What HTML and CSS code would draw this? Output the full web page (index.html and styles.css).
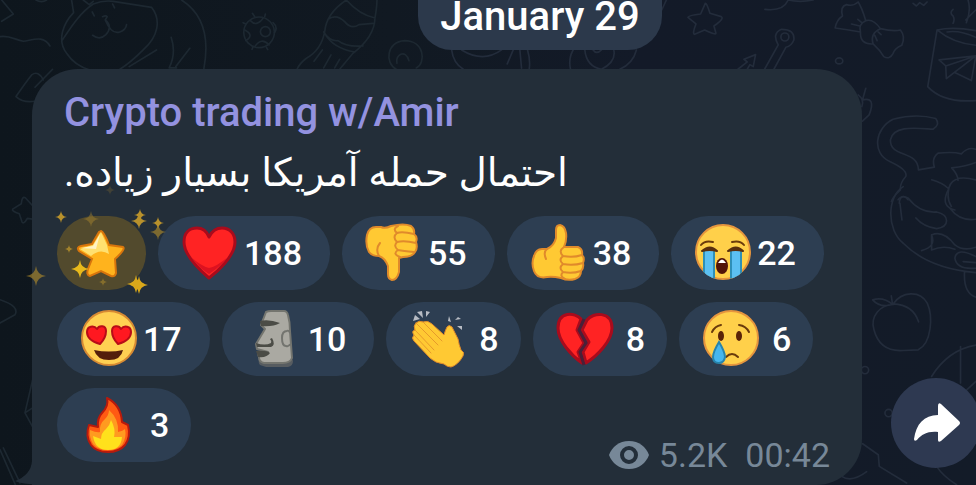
FILE: index.html
```html
<!DOCTYPE html>
<html lang="en">
<head>
    <meta charset="UTF-8">
    <meta name="viewport" content="width=device-width, initial-scale=1.0">
    <title>Crypto trading w/Amir</title>
    <link rel="stylesheet" href="styles.css">
</head>
<body>
    <!-- Wallpaper doodles -->
    <svg class="wallpaper" aria-hidden="true">
        <g class="doodle-left" transform="scale(.333)">
            <path d="M5 0L40 42L5 64M0 110C30 105 45 120 70 124C100 120 130 105 150 138M108 0Q125 10 140 0"/>
            <path d="M215 0L221 38C190 70 170 120 200 160Q225 198 270 210M186 122C220 70 245 35 280 12Q310 0 340 4L455 22C485 60 475 110 430 150Q390 190 360 208M250 0L268 14L280 4"/>
            <path d="M277 36L283 48M338 12L344 24M308 50Q318 45 322 50L316 60Q340 80 318 104Q300 122 278 106M316 60Q335 105 360 96Q378 90 380 74M545 0Q640 60 612 208M514 112Q530 160 508 204L530 204M570 145L528 200M470 150L388 200"/>
            <circle cx="778" cy="97" r="46"/>
            <circle cx="797" cy="95" r="15"/>
            <path d="M752 62Q770 82 790 55M735 90Q765 105 738 122M765 140Q785 110 808 135M820 68Q836 82 824 98M765 50L758 40M795 50L797 42M738 72L730 68M760 140L757 148M800 142L804 149"/>
            <path d="M1040 0Q980 40 975 95Q965 150 920 175Q900 190 892 208M1040 0Q1080 45 1126 54Q1132 20 1132 0M1126 54Q1125 110 1060 160L1020 208M985 58Q1010 40 1035 65Q1055 90 1078 74L1120 70M972 96Q990 125 1015 122Q1040 142 1090 138M975 100Q1000 145 1066 156M968 150L943 184M994 165L972 204M1020 178L1005 204"/>
            <path d="M1190 208C1155 190 1160 125 1215 122C1275 122 1280 190 1250 204M1228 182C1218 145 1185 165 1192 190"/>
            <path d="M130 240Q115 210 95 225Q75 250 48 290Q70 310 105 304M158 208L105 262"/>
            <path d="M98 618L76 594Q66 588 64 612L38 628Q34 634 58 642L66 666Q70 676 82 656L98 658"/>
            <path d="M0 900Q60 920 45 945L0 970M98 1225L75 1240L98 1282M98 1140L75 1240M0 1350L48 1460M10 1345L60 1450"/>
        </g>
        <g class="doodle-right" transform="translate(400 0) scale(.333)">
            <path d="M155 150Q160 190 190 208M185 150Q250 190 305 150M340 150L322 192M360 150L365 205M383 150Q392 180 388 208M512 208Q505 175 520 150M710 150Q700 190 660 208M555 150Q560 200 605 208Q650 185 642 150M580 150Q590 165 605 150M800 0L786 30"/>
        </g>
        <g class="doodle-right" transform="translate(660 0) scale(.333)">
            <path d="M136 10Q140 8 150 40L184 50Q194 56 162 78L168 100Q168 106 134 90L104 103Q96 102 108 72L84 52Q86 46 122 42Z"/>
            <path d="M315 28Q370 35 385 0M385 0Q420 8 460 0M234 208L262 186L252 178L287 164L280 200L270 194L262 208M314 208L355 135Q335 100 365 88Q405 88 402 120Q395 138 378 142L342 208"/>
            <circle cx="375" cy="111" r="12"/>
            <path d="M602 96Q560 88 526 84Q530 60 548 48Q540 20 560 14Q580 20 595 6Q605 20 618 62M602 96Q595 72 618 62Q640 55 662 86Q630 100 640 132Q600 135 602 96M662 86Q700 95 722 90Q738 110 726 136Q705 145 700 160Q690 180 672 170Q660 150 640 132M575 72L600 78M594 58L606 68M645 106L652 122M655 96L664 104"/>
            <ellipse cx="538" cy="183" rx="11" ry="9"/>
            <path d="M760 10L770 18L780 8L792 16L802 6M832 90L804 260Q850 310 948 302M832 90Q880 80 948 92M832 90Q880 130 948 136M862 96Q900 90 948 112M838 180L948 168L860 236L858 198ZM858 198L948 168M885 218L935 242L948 170M880 28Q868 38 880 48Q886 58 880 70M925 0Q935 30 920 68M948 30L918 60"/>
            <path d="M595 285Q615 300 606 320M618 265L608 300Q650 290 628 345L608 364"/>
            <path d="M776 510C775 450 690 475 692 420C700 375 770 385 820 388Q842 375 828 356Q770 340 700 358C645 385 635 460 690 485Q745 510 738 530Q720 550 722 570Q700 590 695 605M776 510L824 502Q815 475 835 460Q880 455 905 462Q925 440 948 448M876 504Q920 500 948 488M876 504Q895 525 895 542M816 540Q850 550 866 566M948 540Q870 520 866 575Q862 600 875 620M715 600Q730 580 745 600"/>
        </g>
        <g class="doodle-right" transform="translate(840 160) scale(.333)">
            <path d="M190 80C140 110 140 210 190 250C240 300 310 330 408 338M178 130Q180 100 205 115Q240 160 290 156C330 165 330 200 290 206Q250 200 228 174M186 180L180 130M245 272Q290 260 275 225M275 225Q310 210 345 255Q370 275 408 262M275 225L275 270Q310 255 345 268M408 290Q350 260 345 295Q350 330 408 325M370 305L408 308M374 335Q370 400 408 412M325 90Q300 140 345 150M330 145Q360 185 408 178"/>
            <path d="M160 434C120 435 90 470 102 510C115 560 150 575 190 572L235 570C275 550 280 470 262 430C240 390 185 395 160 432Q220 435 236 486M158 434L154 408M158 434Q120 445 98 420Q130 410 158 434"/>
            <circle cx="75" cy="631" r="11"/>
            <circle cx="146" cy="760" r="11"/>
            <path d="M275 650Q325 570 408 556M362 560L362 670M408 665L370 700M68 852L115 885L118 920L200 970M290 920Q310 950 350 975M5 950Q35 970 80 936"/>
        </g>
    </svg>

    <main class="chat">
        <div class="date-row">
            <time class="date">January 29</time>
        </div>

        <div class="message-row">
            <article class="message">
                <svg class="tail" viewBox="0 0 40 24" aria-hidden="true"><path d="M17 0Q16 14 0 20Q8 24 40 24V0Z"/></svg>
                <h1 class="sender">Crypto trading w/Amir</h1>
                <p class="text" lang="fa" dir="rtl">احتمال حمله آمریکا بسیار زیاده.</p>

                <div class="reactions">
                    <button class="reaction star" aria-label="Star">
                        <svg class="emoji" viewBox="0 0 60 60">
                            <path d="M29 8Q32 9 37 22L51 24Q54 26 43 36L44 50Q43 54 39 53L29 48L18 53Q14 52 16 46L20 36L7 28Q4 24 9 23L20 21L27 9Z" fill="#ffb31d" stroke="#d8750c" stroke-width="2"/>
                            <path d="M29 9L35 22L37 31Q28 25 19 33L8 26L21 22Z" fill="#ffe070"/>
                            <path d="M28 11L24 26L9 25L21 23Z" fill="#fff3c3"/>
                        </svg>
                        <svg class="sparkles" viewBox="20 180 160 120" aria-hidden="true">
                            <defs><path id="spark" d="M0-10Q1-1 10 0Q1 1 0 10Q-1 1-10 0Q-1-1 0-10Z"/></defs>
                            <use href="#spark" transform="translate(61 217) scale(.6)"/>
                            <use href="#spark" transform="translate(91 219) scale(.8)" opacity=".4"/>
                            <use href="#spark" transform="translate(110 190) scale(.5)" opacity=".2"/>
                            <use href="#spark" transform="translate(140 215) scale(.6)"/>
                            <use href="#spark" transform="translate(139 221) scale(.8)"/>
                            <use href="#spark" transform="translate(158 223) scale(.6)"/>
                            <use href="#spark" transform="translate(158 232) scale(.8)" opacity=".6"/>
                            <use href="#spark" transform="translate(69 249) scale(.4)" opacity=".8"/>
                            <use href="#spark" transform="translate(80 269) scale(.9)" fill="#e8b91c"/>
                            <use href="#spark" transform="translate(36 276) scale(1)" opacity=".6"/>
                            <use href="#spark" transform="translate(103 282) scale(.4)" opacity=".5"/>
                            <use href="#spark" transform="translate(136 284) scale(.9)" fill="#d9a81b"/>
                            <use href="#spark" transform="translate(139 285) scale(.9)" fill="#d9a81b"/>
                        </svg>
                    </button>
                    <button class="reaction">
                        <svg class="emoji" viewBox="0 0 60 60" aria-hidden="true">
                            <path d="M29 55C22 49 4 33 4 19C4 9 10 5 17 5C23 5 27 9 29 14C32 8 37 5 42 5C50 5 55 11 55 19C55 33 37 49 29 55Z" fill="#ff2323" stroke="#a90b1c" stroke-width="3" stroke-linejoin="round"/>
                            <path d="M11 34Q19 45 29 51Q40 44 48 34Q36 44 29 45Q21 43 11 34Z" fill="#dc1220"/>
                        </svg>
                        <span class="count">188</span>
                    </button>
                    <button class="reaction">
                        <svg class="emoji" viewBox="0 0 60 60" aria-hidden="true">
                            <path d="M17 4Q21 6 27 3Q40 0 47 3Q51 6 50 11Q54 14 52 19Q54 25 51 29Q48 34 39 34L35 35L35 49Q33 57 28 57Q24 56 24 51L24 43Q21 35 15 33Q8 33 5 29Q1 22 3 12Q5 4 12 4Z" fill="#ffc933" stroke="#e08a2b" stroke-width="2" stroke-linejoin="round"/>
                            <path d="M50 11Q38 8 33 10Q28 6 34 3M52 20Q40 17 33 19Q28 14 33 10M50 29Q39 28 34 27Q29 23 33 19M34 27Q28 31 36 34M15 33Q11 26 16 20" fill="none" stroke="#e08a2b" stroke-width="2" stroke-linecap="round"/>
                        </svg>
                        <span class="count">55</span>
                    </button>
                    <button class="reaction">
                        <svg class="emoji" viewBox="0 0 60 60" aria-hidden="true">
                            <path d="M18 26Q25 23 27 15L27 7Q27 2 31 2Q36 3 37 10Q38 17 35 24L49 24Q54 26 53 32Q56 35 54 40Q55 45 52 48Q52 54 46 56Q39 58 32 55Q23 53 18 54Q8 56 5 48Q2 40 5 33Q7 26 13 26Z" fill="#ffc933" stroke="#e08a2b" stroke-width="2" stroke-linejoin="round"/>
                            <path d="M35 24Q29 28 34 33Q44 35 53 32M34 33Q29 37 34 41Q44 43 54 40M34 41Q29 45 34 49Q43 51 52 48M34 49Q30 53 36 56M18 26Q14 29 17 36" fill="none" stroke="#e08a2b" stroke-width="2" stroke-linecap="round"/>
                        </svg>
                        <span class="count">38</span>
                    </button>
                    <button class="reaction">
                        <svg class="emoji" viewBox="0 0 60 60" aria-hidden="true">
                            <clipPath id="face"><circle cx="30" cy="29" r="28"/></clipPath>
                            <circle cx="30" cy="29" r="27" fill="#ffd04a" stroke="#e5953e" stroke-width="2"/>
                            <g clip-path="url(#face)">
                                <path d="M10 27H22V60H10ZM37 27H49V60H37Z" fill="#2e8fb7"/>
                                <path d="M12 28H20V60H12ZM39 28H47V60H39Z" fill="#5cc0f2"/>
                            </g>
                            <path d="M8 22Q12 17 20 19M39 19Q47 17 51 22" fill="none" stroke="#6b3b0b" stroke-width="2" stroke-linecap="round"/>
                            <path d="M9 28Q17 21 24 28Q17 26 9 28ZM35 28Q43 21 50 28Q43 26 35 28Z" fill="#5a2f0d" stroke="#5a2f0d" stroke-width="2" stroke-linejoin="round"/>
                            <ellipse cx="29" cy="43" rx="6" ry="8" fill="#511408"/>
                            <path d="M25 40Q29 33 33 40Z" fill="#fff"/>
                        </svg>
                        <span class="count">22</span>
                    </button>
                    <button class="reaction">
                        <svg class="emoji" viewBox="0 0 60 60" aria-hidden="true">
                            <circle cx="30" cy="29" r="27" fill="#ffd052" stroke="#d78a33" stroke-width="2"/>
                            <g fill="#ff1820" stroke="#b80c18" stroke-width="2" stroke-linejoin="round">
                                <path d="M21 35C14 33 8 29 8 23C8 17 15 16 18 20C20 16 27 16 27 22C27 27 24 32 21 35Z"/>
                                <path d="M39 35C46 33 52 29 52 23C52 17 45 16 42 20C40 16 33 16 33 22C33 27 36 32 39 35Z"/>
                            </g>
                            <path d="M15 41Q30 44 44 41Q42 51 30 51Q18 51 15 41Z" fill="#541f0b"/>
                        </svg>
                        <span class="count">17</span>
                    </button>
                    <button class="reaction">
                        <svg class="emoji" viewBox="0 0 60 60" aria-hidden="true">
                            <path d="M15 49Q14 54 16 56L22 58H44Q49 57 49 52L46 44Z" fill="#575c60"/>
                            <path d="M22 3Q24 2 27 2H40Q43 2 44 6Q46 13 46 22L48 49Q46 54 39 54H20Q15 53 15 48L14 45L24 43L13 40L12 35L21 20L17 16Z" fill="#aaa9a2" stroke="#74756f" stroke-width="2" stroke-linejoin="round"/>
                            <path d="M16 12Q25 10 36 14Q29 18 17 17ZM12 34Q21 37 27 34Q28 32 26 30L28 29Q32 36 27 38H13ZM12 42Q23 41 26 44Q23 49 14 48Z" fill="#4b4c46"/>
                            <path d="M43 22Q38 22 38 29Q38 37 42 37Q45 38 46 35M43 22Q45 21 46 24" fill="none" stroke="#73746f" stroke-width="2"/>
                        </svg>
                        <span class="count">10</span>
                    </button>
                    <button class="reaction single">
                        <svg class="emoji" viewBox="0 0 60 60" aria-hidden="true">
                            <path d="M7 6L12 10L5 12ZM9 3L14 2L15 9ZM18 2L22 3L18 8ZM41 7L43 13L40 12ZM47 11L50 8L53 10ZM49 17L54 17V21Z" fill="#b8bcc4"/>
                            <path d="M8 14Q11 11 15 13Q20 11 24 15L36 26Q37 22 39 18Q41 15 44 18L50 30Q51 36 53 41Q57 43 55 47Q50 56 43 58Q39 58 36 55Q27 54 22 49L6 32Q3 29 6 26Q3 22 7 21Q5 17 8 14Z" fill="#ffc933" stroke="#e08a2b" stroke-width="1"/>
                            <path d="M8 14L30 36M15 13L34 32M7 21L26 41M6 26L23 44" fill="none" stroke="#e69a2b" stroke-width="1" stroke-linecap="round"/>
                        </svg>
                        <span class="count">8</span>
                    </button>
                    <button class="reaction single">
                        <svg class="emoji" viewBox="0 0 60 60" aria-hidden="true">
                            <g fill="#ff2323" stroke="#a90b1c" stroke-width="3" stroke-linejoin="round">
                                <path d="M26 10C20 3 3 2 3 19C3 32 17 47 27 54L23 43L29 34L22 21Z"/>
                                <path d="M32 11C38 3 57 2 57 19C57 32 42 47 31 54L28 43L34 33L27 21Z"/>
                            </g>
                            <path d="M29 10L24 21L31 34L25 43L29 56" fill="none" stroke="#4a2038" stroke-width="3"/>
                        </svg>
                        <span class="count">8</span>
                    </button>
                    <button class="reaction single">
                        <svg class="emoji" viewBox="0 0 60 60" aria-hidden="true">
                            <circle cx="30" cy="29" r="27" fill="#ffd04a" stroke="#e5953e" stroke-width="2"/>
                            <ellipse cx="20" cy="27" rx="3" ry="5" fill="#5a2308"/>
                            <ellipse cx="38" cy="27" rx="3" ry="5" fill="#5a2308"/>
                            <path d="M11 23Q14 17 20 16M38 16Q45 17 48 23M25 48Q31 42 37 48" fill="none" stroke="#6b3b0b" stroke-width="2" stroke-linecap="round"/>
                            <path d="M18 33Q24 43 24 48Q23 54 18 54Q12 54 12 48Q12 43 18 33Z" fill="#46b6ee" stroke="#2784ac" stroke-width="2"/>
                        </svg>
                        <span class="count">6</span>
                    </button>
                    <button class="reaction single">
                        <svg class="emoji" viewBox="0 0 60 60" aria-hidden="true">
                            <path d="M28 3Q42 10 43 27L49 30Q52 42 46 50Q40 57 29 57Q17 57 12 50Q6 41 10 30L19 32Q18 23 23 18Q30 11 28 3Z" fill="#ff5a13" stroke="#b81a0c" stroke-width="2" stroke-linejoin="round"/>
                            <path d="M30 15Q40 24 39 37Q44 36 46 34Q48 42 43 50Q38 55 29 55Q19 55 14 49Q10 42 11 35Q18 38 21 37Q20 29 26 24Q30 20 30 15Z" fill="#ff9a20"/>
                            <path d="M32 25Q37 34 35 42L43 42Q42 55 29 55Q16 55 14 41L22 44Q22 38 27 34Q31 30 32 25Z" fill="#ffe11c"/>
                        </svg>
                        <span class="count">3</span>
                    </button>
                </div>

                <footer class="meta">
                    <svg class="eye" viewBox="0 0 40 28" role="img" aria-label="Views">
                        <path d="M20 0C10 0 3 6 0 14C3 22 10 28 20 28C30 28 37 22 40 14C37 6 30 0 20 0Z" fill="#778898"/>
                        <circle cx="20" cy="14" r="7" fill="#778898" stroke="#232e39" stroke-width="4"/>
                    </svg>
                    <span class="views">5.2K</span>
                    <time>00:42</time>
                </footer>
            </article>

            <button class="share" aria-label="Share">
                <svg viewBox="0 0 90 90"><path d="M47 28Q47 24 50 26L68 43Q70 45 68 47L50 63Q47 65 47 62V54C37 53 31 56 26 62Q23 64 23 61C25 46 33 37 47 37Z" fill="#fff"/></svg>
            </button>
        </div>
    </main>
</body>
</html>
```
FILE: styles.css
```css
body {
    margin: 0;
    min-height: 100vh;
    overflow: hidden;
    position: relative;
    font-family: Roboto, "DejaVu Sans", sans-serif;
    color: #fff;
    background: linear-gradient(90deg, #0e161d, #111922 40%, #131a28 65%, #131b28);
}
button {
    border: none;
    padding: 0;
    font: inherit;
    color: inherit;
    cursor: pointer;
}
.wallpaper {
    position: absolute;
    top: 0;
    left: 0;
    width: 100%;
    height: 100%;
    fill: none;
    stroke-width: 5;
    stroke-linecap: round;
    stroke-linejoin: round;
}
.doodle-left {
    stroke: #1d2831;
}
.doodle-right {
    stroke: #232c3b;
}
.chat {
    position: relative;
    margin-right: -5px;
}
.date-row {
    display: flex;
    justify-content: center;
    padding-left: 99px;
}
.date {
    padding: 0 22px 16px;
    border-radius: 0 0 34px 34px;
    background-color: #2c394b;
    font-size: 40px;
    font-weight: 500;
    line-height: 34px;
}
.message-row {
    display: flex;
    align-items: flex-end;
    gap: 29px;
    margin-top: 19px;
    padding-left: 32px;
}
.message {
    position: relative;
    flex: 1;
    min-width: 0;
    box-sizing: border-box;
    padding: 20px 32px 10px;
    border-radius: 46px 46px 46px 0;
    background-color: #232e39;
}
.tail {
    position: absolute;
    left: -17px;
    bottom: 0;
    width: 40px;
    height: 24px;
    fill: #232e39;
}
.sender {
    margin: 0;
    color: #9392e0;
    font-size: 40px;
    font-weight: 500;
    line-height: 48px;
}
.text {
    margin: 0;
    font-size: 39px;
    line-height: 72px;
    text-align: left;
    white-space: nowrap;
}
.reactions {
    display: flex;
    flex-wrap: wrap;
    gap: 12px;
    margin: 7px -7px 0;
}
.reaction {
    display: flex;
    align-items: center;
    gap: 4px;
    height: 74px;
    padding: 0 28px 0 22px;
    border-radius: 37px;
    background-color: #2d3e52;
    font-size: 34px;
    font-weight: 500;
}
.reaction.single {
    gap: 11px;
    padding-right: 22px;
}
.reaction.star {
    position: relative;
    justify-content: center;
    width: 89px;
    padding: 0;
    background-color: #524a2d;
}
.emoji {
    width: 60px;
    height: 60px;
}
.sparkles {
    position: absolute;
    left: -37px;
    top: -36px;
    width: 160px;
    height: 120px;
    fill: #b8912c;
    pointer-events: none;
}
.meta {
    display: flex;
    justify-content: flex-end;
    align-items: center;
    gap: 10px;
    margin-top: -27px;
    color: #778898;
    font-size: 34px;
    line-height: 40px;
}
.eye {
    width: 40px;
    height: 28px;
}
.views {
    margin-right: 8px;
}
.share {
    flex: none;
    width: 90px;
    height: 90px;
    margin-bottom: 17px;
    border-radius: 50%;
    background-color: #2e3951;
}
.share svg {
    display: block;
}
```
